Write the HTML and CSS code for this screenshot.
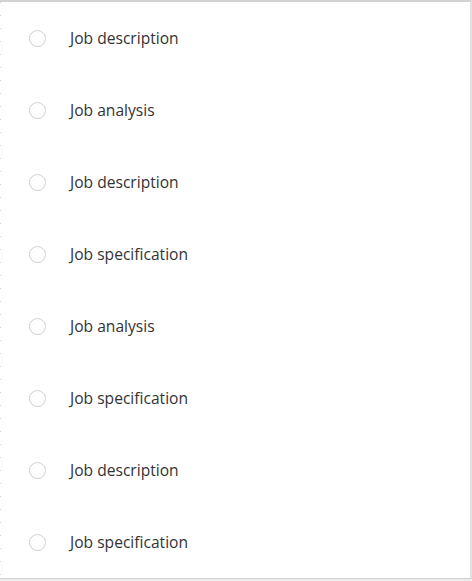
FILE: index.html
```html
<!DOCTYPE html>
<html>
<head>
<meta charset="utf-8">
<link rel="stylesheet" href="styles.css">
</head>
<body>
<div class="panel">
  <label class="option"><span class="radio"></span><span class="label">Job description</span></label>
  <label class="option"><span class="radio"></span><span class="label">Job analysis</span></label>
  <label class="option"><span class="radio"></span><span class="label">Job description</span></label>
  <label class="option"><span class="radio"></span><span class="label">Job specification</span></label>
  <label class="option"><span class="radio"></span><span class="label">Job analysis</span></label>
  <label class="option"><span class="radio"></span><span class="label">Job specification</span></label>
  <label class="option"><span class="radio"></span><span class="label">Job description</span></label>
  <label class="option"><span class="radio"></span><span class="label">Job specification</span></label>
</div>
</body>
</html>
```
FILE: styles.css
```css
html, body {
  margin: 0;
  padding: 0;
  background: #ececec;
}
body {
  font-family: "Open Sans", "Liberation Sans", sans-serif;
  width: 472px;
  height: 581px;
  overflow: hidden;
}
.panel {
  box-sizing: border-box;
  width: 472px;
  background-color: #fff;
  background-image: repeating-linear-gradient(to bottom, #d4d4d4 0, #d4d4d4 1px, transparent 1px, transparent 13px);
  background-size: 1px 100%;
  background-repeat: no-repeat;
  border-top: 2px solid #d2d2d2;
  border-right: 2px solid #e2e2e2;
  border-bottom: 1px solid #d0d0d0;
  display: flex;
  flex-direction: column;
}
.option {
  height: 72px;
  display: flex;
  align-items: center;
  padding-left: 29px;
  gap: 24px;
}
.radio {
  box-sizing: border-box;
  width: 17px;
  height: 17px;
  border: 1px solid #cfcfcf;
  border-radius: 50%;
  background: #fff;
  flex: none;
}
.label {
  font-size: 15.6px;
  color: #333;
}
```
